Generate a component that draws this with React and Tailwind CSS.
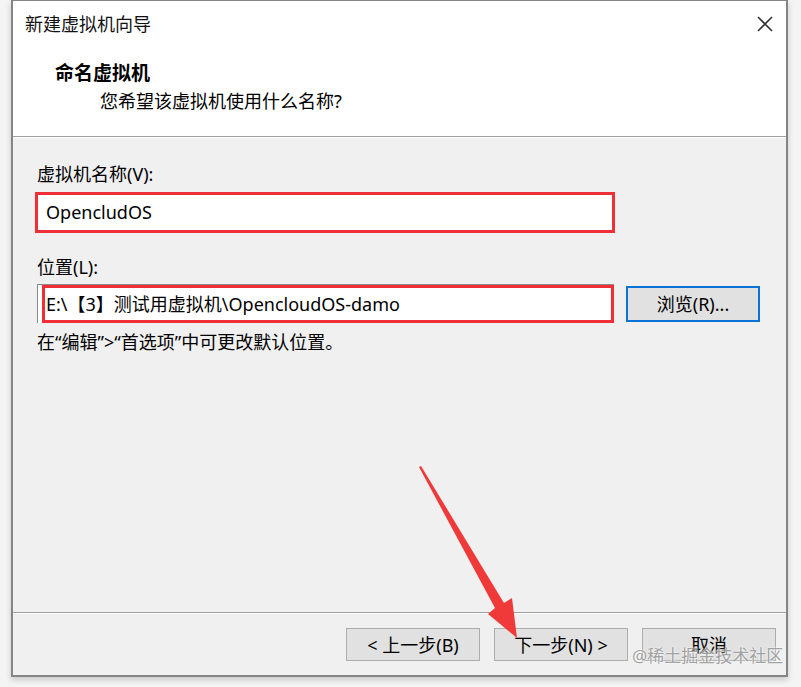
import React from "react";

const font = { fontFamily: '"Noto Sans", "Noto Sans CJK SC", sans-serif' };

const Button = ({ children }) => (
  <button className="w-[134px] h-[33px] border border-[#adadad] bg-[#e1e1e1] text-[18px] leading-none text-black flex items-center justify-center">
    {children}
  </button>
);

const Arrow = () => (
  <svg
    className="absolute left-0 top-0 pointer-events-none"
    width="801"
    height="687"
    viewBox="0 0 801 687"
  >
    <polygon
      points="419,467 421,466 504,603 512,598 517,638 488,614 495,608"
      fill="#f03a3a"
    />
  </svg>
);

export default function App() {
  return (
    <div
      className="relative w-[801px] h-[687px] bg-[#f4f4f4] pl-[11px] pr-[13px] overflow-hidden"
      style={font}
    >
      <div className="h-[677px] flex flex-col bg-[#f0f0f0] border-x-2 border-b-2 border-t border-[#858585] shadow-[0_3px_6px_rgba(0,0,0,0.18)]">
        {/* header */}
        <div className="h-[136px] bg-white border-b border-[#a0a0a0] shrink-0">
          <div className="flex justify-between items-start pt-[11px] pl-[12px] pr-[13px]">
            <div className="text-[18px] leading-[24px] text-[#111]">新建虚拟机向导</div>
            <svg width="16" height="16" viewBox="0 0 16 16" className="mt-[4px]">
              <path d="M1 1 L15 15 M15 1 L1 15" stroke="#333" strokeWidth="1.6" fill="none" />
            </svg>
          </div>
          <div className="pl-[42px] mt-[25px] text-[19px] leading-[24px] font-bold text-black">
            命名虚拟机
          </div>
          <div className="pl-[87px] mt-[4px] text-[18px] leading-[24px] text-black">
            您希望该虚拟机使用什么名称?
          </div>
        </div>

        {/* body */}
        <div className="flex-1 border-t border-white pl-[22px] pr-[24px] pt-[24px]">
          <div className="pl-[2px] text-[18px] leading-[24px] text-black">虚拟机名称(V):</div>
          <div className="mt-[6px] w-[580px] h-[41px] border-[3px] border-[#ee2f35] bg-white flex items-center pl-[8px] text-[18px] text-black">
            OpencludOS
          </div>
          <div className="mt-[22px] pl-[2px] text-[18px] leading-[24px] text-black">位置(L):</div>
          <div className="mt-[5px] flex items-center gap-[12px]">
            <div className="ml-[2px] w-[577px] h-[39px] border-l border-t border-[#8a8a8a] pl-[4px] bg-white">
              <div className="h-full border-[3px] border-[#ee2f35] bg-white flex items-center pl-[1px] text-[18px] text-black whitespace-nowrap">
                E:\【3】测试用虚拟机\OpencloudOS-damo
              </div>
            </div>
            <button className="w-[134px] h-[36px] border-2 border-[#0a74d6] bg-[#e1e1e1] text-[18px] leading-none text-black flex items-center justify-center">
              浏览(R)...
            </button>
          </div>
          <div className="mt-[7px] pl-[2px] text-[18px] leading-[24px] text-black">
            在“编辑”&gt;“首选项”中可更改默认位置。
          </div>
        </div>

        {/* footer */}
        <div className="h-[63px] shrink-0 border-t border-[#a0a0a0]">
          <div className="h-full border-t border-white flex justify-end items-start pt-[14px] pr-[10px] gap-[14px]">
            <Button>&lt; 上一步(B)</Button>
            <Button>下一步(N) &gt;</Button>
            <Button>取消</Button>
          </div>
        </div>
      </div>

      <Arrow />

      <div
        className="absolute left-[632px] top-[644px] text-[17px] leading-[24px] text-[#9a9a9a] opacity-90 whitespace-nowrap"
        style={{ textShadow: "0 0 2px #fff, 0 0 2px #fff" }}
      >
        @稀土掘金技术社区
      </div>
    </div>
  );
}
